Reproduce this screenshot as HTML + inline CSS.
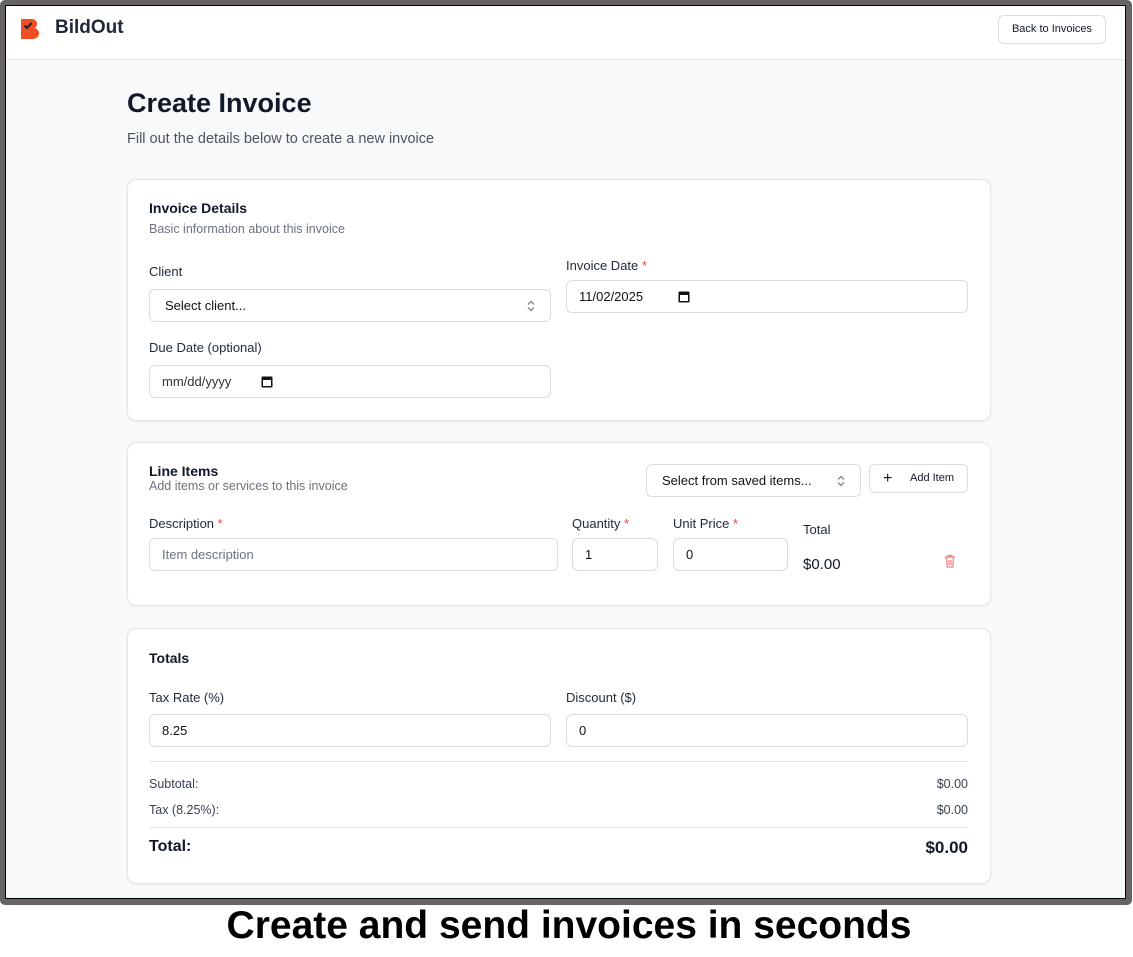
<!DOCTYPE html>
<html><head><style>
*{box-sizing:border-box;margin:0;padding:0}
body{width:1133px;height:957px;background:#fff;font-family:"Liberation Sans",sans-serif;color:#111827;position:relative;overflow:hidden}
.frame{position:absolute;left:0;top:0;width:1132px;height:905px;background:#686464;border-radius:5px}
.screen{position:absolute;left:5px;top:5px;width:1121px;height:894px;border:1px solid #000;background:#f8f9fb;overflow:hidden}
.hdr{position:absolute;left:0;top:0;right:0;height:54px;background:#fff;border-bottom:1px solid #e5e7eb}
.abs{position:absolute}
.card{position:absolute;left:121px;width:864px;background:#fff;border:1px solid #e3e5e8;border-radius:9px;box-shadow:0 1px 2px rgba(0,0,0,.05)}
.inp{position:absolute;height:33px;border:1px solid #d9dce1;border-radius:6px;background:#fff;font-size:13px;padding-left:12px;line-height:31px;color:#111}
.lbl{position:absolute;font-size:13px;color:#1f2937}
.req{color:#ef4444}
.t{position:absolute;white-space:nowrap}
.cal{position:absolute;top:9px}
.chev{position:absolute;right:15px;top:10px}
</style></head><body>
<div class="frame"></div>
<div class="screen">
 <div class="hdr">
  <svg class="abs" style="left:14px;top:12px" width="20" height="22" viewBox="0 0 20 22"><path d="M1 1h10c4 0 6 2 6 5 0 2-1 3-2 4 2 1 4 2.5 4 5.5 0 3.5-3 5.5-7 5.5H1z" fill="#f04e23"/><path d="M4.5 7.5l2.5 2.5 4.5-5" stroke="#1f2937" stroke-width="2.2" fill="none"/></svg>
  <div class="t" style="left:49px;top:11px;font-size:19px;font-weight:bold;color:#1f2937">BildOut</div>
  <div class="abs" style="left:992px;top:9px;width:108px;height:29px;border:1px solid #d9dce1;border-radius:6px;font-size:11px;text-align:center;line-height:27px">Back to Invoices</div>
 </div>
 <div class="t" style="left:121px;top:82px;font-size:27px;font-weight:bold">Create Invoice</div>
 <div class="t" style="left:121px;top:125px;font-size:14.5px;color:#4b5563">Fill out the details below to create a new invoice</div>

 <div class="card" style="top:173px;height:242px">
  <div class="t" style="left:21px;top:20px;font-size:14px;font-weight:bold">Invoice Details</div>
  <div class="t" style="left:21px;top:42px;font-size:12.5px;color:#6b7280">Basic information about this invoice</div>
  <div class="lbl" style="left:21px;top:84px">Client</div>
  <div class="inp" style="left:21px;top:109px;width:402px;padding-left:15px">Select client...<svg class="chev" width="8" height="12" viewBox="0 0 8 12"><path d="M1 4.5L4 1.5 7 4.5M1 7.5L4 10.5 7 7.5" stroke="#777" fill="none" stroke-width="1.2"/></svg></div>
  <div class="lbl" style="left:438px;top:78px">Invoice Date <span class="req">*</span></div>
  <div class="inp" style="left:438px;top:100px;width:402px">11/02/2025<svg class="cal" style="left:111px" width="12" height="13" viewBox="0 0 12 13"><rect x="0.5" y="1.5" width="11" height="11" rx="1" fill="#111"/><rect x="2" y="5" width="8" height="6" fill="#fff"/></svg></div>
  <div class="lbl" style="left:21px;top:160px">Due Date (optional)</div>
  <div class="inp" style="left:21px;top:185px;width:402px;color:#333">mm/dd/yyyy<svg class="cal" style="left:111px" width="12" height="13" viewBox="0 0 12 13"><rect x="0.5" y="1.5" width="11" height="11" rx="1" fill="#111"/><rect x="2" y="5" width="8" height="6" fill="#fff"/></svg></div>
 </div>

 <div class="card" style="top:436px;height:164px">
  <div class="t" style="left:21px;top:20px;font-size:14px;font-weight:bold">Line Items</div>
  <div class="t" style="left:21px;top:36px;font-size:12.5px;color:#6b7280">Add items or services to this invoice</div>
  <div class="inp" style="left:518px;top:21px;width:215px;padding-left:15px">Select from saved items...<svg class="chev" width="8" height="12" viewBox="0 0 8 12"><path d="M1 4.5L4 1.5 7 4.5M1 7.5L4 10.5 7 7.5" stroke="#777" fill="none" stroke-width="1.2"/></svg></div>
  <div class="abs" style="left:741px;top:21px;width:99px;height:29px;border:1px solid #d9dce1;border-radius:6px;font-size:11px;line-height:27px"><span style="position:absolute;left:13px;font-size:16px">+</span><span style="position:absolute;left:40px">Add Item</span></div>
  <div class="lbl" style="left:21px;top:73px">Description <span class="req">*</span></div>
  <div class="inp" style="left:21px;top:95px;width:409px;color:#6b7280">Item description</div>
  <div class="lbl" style="left:444px;top:73px">Quantity <span class="req">*</span></div>
  <div class="inp" style="left:444px;top:95px;width:86px">1</div>
  <div class="lbl" style="left:545px;top:73px">Unit Price <span class="req">*</span></div>
  <div class="inp" style="left:545px;top:95px;width:115px">0</div>
  <div class="lbl" style="left:675px;top:79px">Total</div>
  <div class="t" style="left:675px;top:113px;font-size:15px">$0.00</div>
  <svg class="abs" style="left:816px;top:111px" width="12" height="14" viewBox="0 0 12 14"><path d="M1 3h10M4 3V1.5h4V3M2.5 3l.7 10h5.6l.7-10M5 6v5M7 6v5" stroke="#f08080" fill="none" stroke-width="1.2"/></svg>
 </div>

 <div class="card" style="top:622px;height:256px">
  <div class="t" style="left:21px;top:21px;font-size:14px;font-weight:bold">Totals</div>
  <div class="lbl" style="left:21px;top:61px">Tax Rate (%)</div>
  <div class="inp" style="left:21px;top:85px;width:402px">8.25</div>
  <div class="lbl" style="left:438px;top:61px">Discount ($)</div>
  <div class="inp" style="left:438px;top:85px;width:402px">0</div>
  <div class="abs" style="left:21px;top:132px;width:819px;border-top:1px solid #e5e7eb"></div>
  <div class="t" style="left:21px;top:148px;font-size:12.5px;color:#374151">Subtotal:</div>
  <div class="t" style="right:22px;top:148px;font-size:12.5px;color:#374151">$0.00</div>
  <div class="t" style="left:21px;top:174px;font-size:12.5px;color:#374151">Tax (8.25%):</div>
  <div class="t" style="right:22px;top:174px;font-size:12.5px;color:#374151">$0.00</div>
  <div class="abs" style="left:21px;top:198px;width:819px;border-top:1px solid #e5e7eb"></div>
  <div class="t" style="left:21px;top:209px;font-size:16px;font-weight:bold">Total:</div>
  <div class="t" style="right:22px;top:209px;font-size:17px;font-weight:bold">$0.00</div>
 </div>
</div>
<div class="t" style="left:0;width:1138px;text-align:center;top:904px;font-size:39px;font-weight:bold;color:#000">Create and send invoices in seconds</div>
</body></html>
